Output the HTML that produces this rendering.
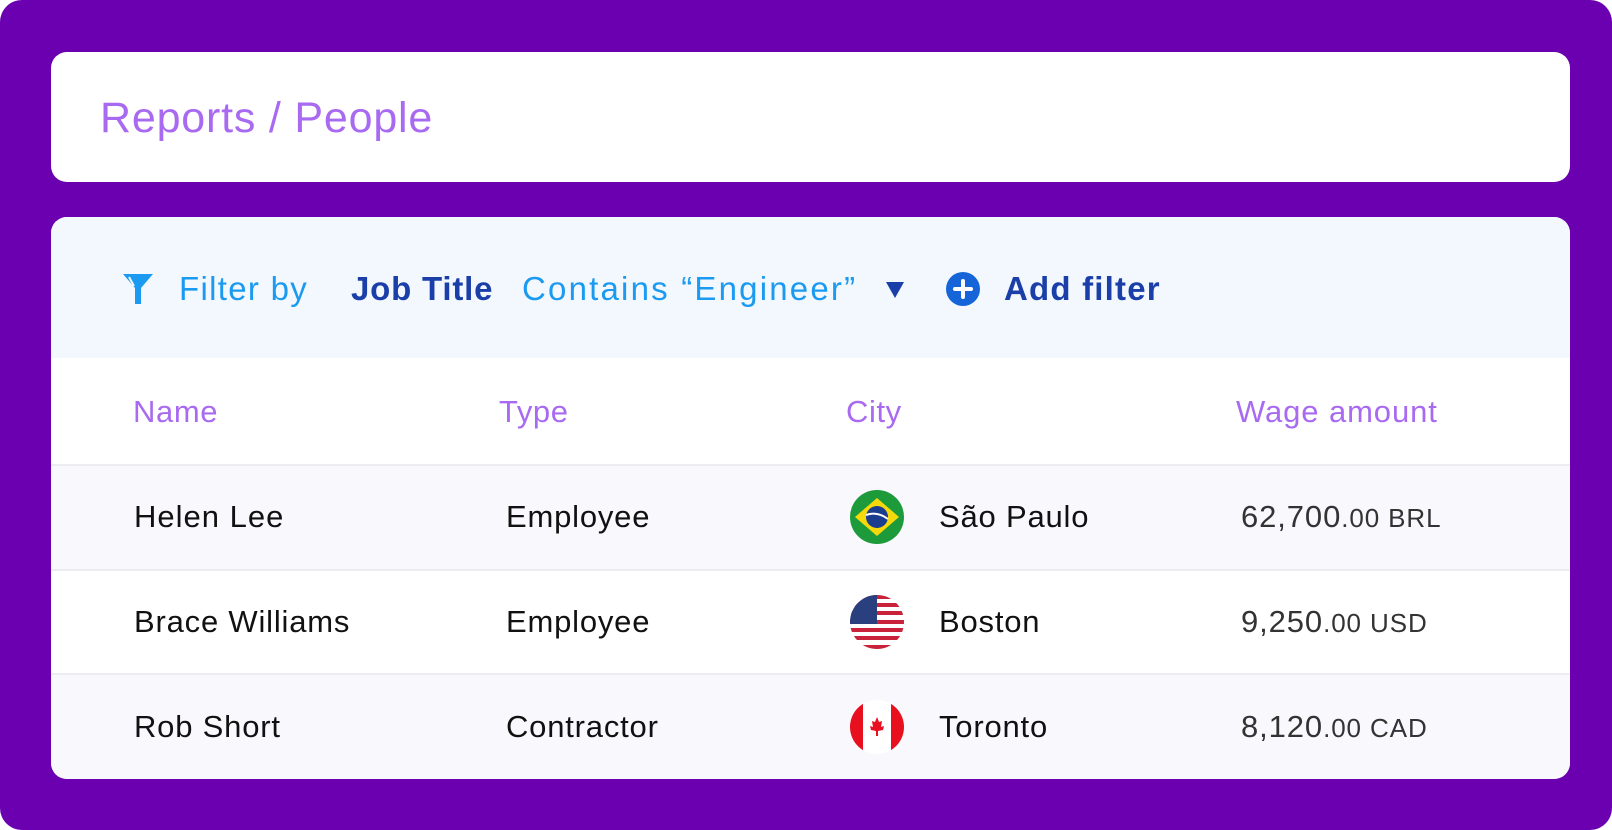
<!DOCTYPE html>
<html><head><meta charset="utf-8">
<style>
*{margin:0;padding:0;box-sizing:border-box}
body{width:1612px;height:830px;background:#fff;font-family:"Liberation Sans",sans-serif;overflow:hidden}
.outer{position:absolute;left:0;top:0;width:1612px;height:830px;background:#6a00b0;border-radius:22px}
.hdr{position:absolute;left:51px;top:52px;width:1519px;height:130px;background:#fff;border-radius:16px}
.hdr span{position:absolute;top:42px;font-size:43px;color:#a86af0;left:49px;letter-spacing:0.8px}
.card{position:absolute;left:51px;top:217px;width:1519px;height:562px;background:#fff;border-radius:16px;overflow:hidden}
.filter{position:absolute;left:0;top:0;width:100%;height:141px;background:#f3f8fe}
.t{position:absolute;white-space:nowrap;transform:translateY(-50%);letter-spacing:0.6px}
.row{position:absolute;left:0;width:100%;border-top:2px solid #ececf2}
</style></head><body>
<div class="outer"></div>
<div class="hdr"><span>Reports / People</span></div>
<div class="card">
 <div class="filter">
  <svg style="position:absolute;left:70px;top:55px" width="34" height="34" viewBox="0 0 34 34"><path d="M2 2H32L20 16V32H14V16Z" fill="#1a9af0"/><path d="M8 5L13 14" stroke="#f3f8fe" stroke-width="2"/></svg>
  <div class="t" style="left:128px;top:72px;font-size:33px;color:#1a9af0;letter-spacing:1.3px">Filter by</div>
  <div class="t" style="left:300px;top:72px;font-size:33px;color:#1a3fa8;font-weight:bold;letter-spacing:0.8px">Job Title</div>
  <div class="t" style="left:471px;top:72px;font-size:33px;color:#1a9af0;letter-spacing:2.2px">Contains “Engineer”</div>
  <svg style="position:absolute;left:835px;top:65px" width="18" height="16"><path d="M0 0H18L9 16Z" fill="#1a3fa8"/></svg>
  <svg style="position:absolute;left:895px;top:55px" width="34" height="34"><circle cx="17" cy="17" r="17" fill="#1565d8"/><path d="M17 9V25M9 17H25" stroke="#fff" stroke-width="4" stroke-linecap="round"/></svg>
  <div class="t" style="left:953px;top:72px;font-size:33px;color:#1a3fa8;font-weight:bold;letter-spacing:1.2px">Add filter</div>
 </div>
 <div class="t" style="left:82px;top:195px;font-size:31px;color:#a86af0">Name</div>
 <div class="t" style="left:448px;top:195px;font-size:31px;color:#a86af0">Type</div>
 <div class="t" style="left:795px;top:195px;font-size:31px;color:#a86af0">City</div>
 <div class="t" style="left:1185px;top:195px;font-size:31px;color:#a86af0;letter-spacing:0.9px">Wage amount</div>

 <div class="row" style="top:247px;height:105px;background:#f8f8fd"></div>
 <div class="row" style="top:352px;height:104px;background:#fff"></div>
 <div class="row" style="top:456px;height:106px;background:#f8f8fd"></div>

 <div class="t" style="left:83px;top:300px;font-size:31px;color:#111;letter-spacing:1px">Helen Lee</div>
 <div class="t" style="left:455px;top:300px;font-size:31px;color:#111;letter-spacing:0.8px">Employee</div>
 <svg style="position:absolute;left:799px;top:273px" width="54" height="54" viewBox="0 0 54 54"><circle cx="27" cy="27" r="27" fill="#1d9a3a"/><path d="M27 8L49 27L27 46L5 27Z" fill="#f5d90a"/><circle cx="27" cy="27" r="11" fill="#1a3d8f"/><path d="M16 25Q27 21 38 29" stroke="#fff" stroke-width="2" fill="none"/></svg>
 <div class="t" style="left:888px;top:300px;font-size:31px;color:#111;letter-spacing:0.8px">São Paulo</div>
 <div class="t" style="left:1190px;top:300px;font-size:31px;color:#333;letter-spacing:0.9px">62,700<span style="font-size:26px">.00 BRL</span></div>

 <div class="t" style="left:83px;top:405px;font-size:31px;color:#111;letter-spacing:0.8px">Brace Williams</div>
 <div class="t" style="left:455px;top:405px;font-size:31px;color:#111;letter-spacing:0.8px">Employee</div>
 <svg style="position:absolute;left:799px;top:378px" width="54" height="54" viewBox="0 0 54 54"><defs><clipPath id="c1"><circle cx="27" cy="27" r="27"/></clipPath></defs><g clip-path="url(#c1)"><rect width="54" height="54" fill="#fff"/><g fill="#c8233a"><rect y="0" width="54" height="4"/><rect y="8" width="54" height="4"/><rect y="16" width="54" height="4"/><rect y="25" width="54" height="4"/><rect y="33" width="54" height="4"/><rect y="41" width="54" height="4"/><rect y="50" width="54" height="4"/></g><rect width="27" height="29" fill="#2a3f7e"/></g></svg>
 <div class="t" style="left:888px;top:405px;font-size:31px;color:#111;letter-spacing:0.8px">Boston</div>
 <div class="t" style="left:1190px;top:405px;font-size:31px;color:#333;letter-spacing:0.9px">9,250<span style="font-size:26px">.00 USD</span></div>

 <div class="t" style="left:83px;top:510px;font-size:31px;color:#111;letter-spacing:0.8px">Rob Short</div>
 <div class="t" style="left:455px;top:510px;font-size:31px;color:#111;letter-spacing:0.8px">Contractor</div>
 <svg style="position:absolute;left:799px;top:483px" width="54" height="54" viewBox="0 0 54 54"><defs><clipPath id="c2"><circle cx="27" cy="27" r="27"/></clipPath></defs><g clip-path="url(#c2)"><rect width="54" height="54" fill="#fff"/><rect width="13" height="54" fill="#e8101f"/><rect x="41" width="13" height="54" fill="#e8101f"/><path d="M27 17L29 22L32 21L31 27L34 26L33 30L28 31V36H26V31L21 30L20 26L23 27L22 21L25 22Z" fill="#e8101f"/></g></svg>
 <div class="t" style="left:888px;top:510px;font-size:31px;color:#111;letter-spacing:0.8px">Toronto</div>
 <div class="t" style="left:1190px;top:510px;font-size:31px;color:#333;letter-spacing:0.9px">8,120<span style="font-size:26px">.00 CAD</span></div>
</div>
</body></html>
